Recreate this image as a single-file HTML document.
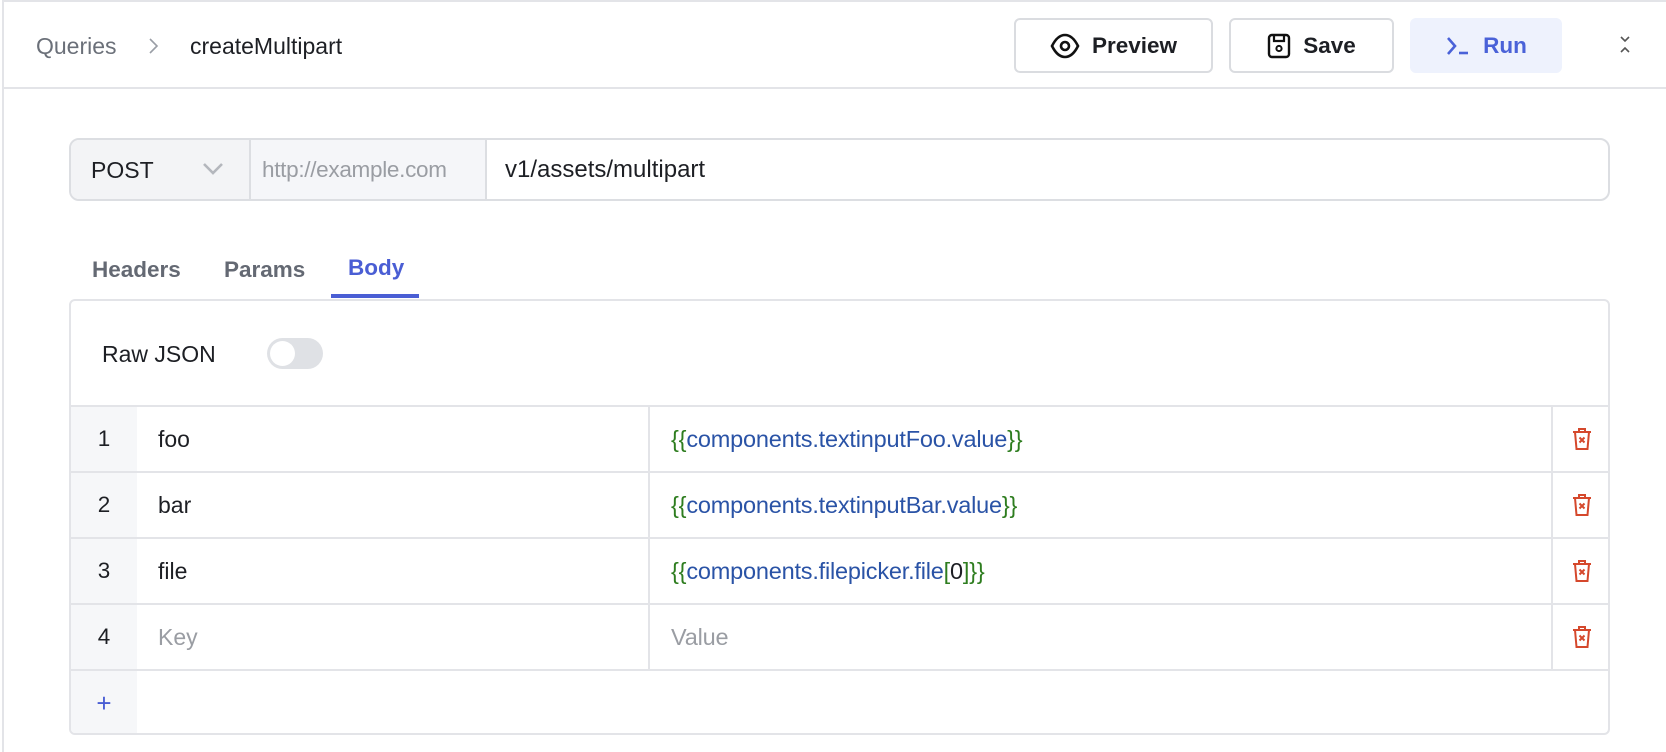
<!DOCTYPE html>
<html><head><meta charset="utf-8"><style>
*{box-sizing:border-box;margin:0;padding:0}
body{width:1666px;height:752px;background:#fff;font-family:"Liberation Sans",sans-serif;position:relative;overflow:hidden;color:#1d1f24}
.abs{position:absolute}
.hdr{left:2px;top:0;width:1664px;height:89px;border-top:2px solid #e3e4e8;border-left:2px solid #e3e4e8;border-bottom:2px solid #e3e4e8}
.vl{left:2px;top:89px;width:2px;height:663px;background:#e3e4e8}
.btn{border:2px solid #dadce0;border-radius:6px;top:18px;height:55px;display:flex;align-items:center;justify-content:center;gap:12px;font-size:22.5px;font-weight:bold}
.t{white-space:nowrap;line-height:1}
.url{left:69px;top:138px;width:1541px;height:63px;border:2px solid #dcdee2;border-radius:10px;overflow:hidden}
.panel{left:69px;top:299px;width:1541px;height:436px;border:2px solid #e3e4e8;border-radius:6px;overflow:hidden}
.row{position:absolute;left:0;width:100%;border-top:2px solid #e3e4e8;height:66px}
.num{position:absolute;left:0;top:0;width:66px;height:100%;background:#f6f7f9;font-size:22.5px;display:flex;align-items:center;justify-content:center}
.k{position:absolute;left:87px;top:0;height:100%;display:flex;align-items:center;font-size:23px}
.v{position:absolute;left:600px;top:0;height:100%;display:flex;align-items:center;font-size:23.5px;color:#2a53a6;letter-spacing:-0.2px}
.d1{position:absolute;left:577px;top:0;width:2px;height:100%;background:#e3e4e8}
.d2{position:absolute;left:1480px;top:0;width:2px;height:100%;background:#e3e4e8}
.tr{position:absolute;left:1500px;top:20px}
.g{color:#2e7d1f}
</style></head><body>
<div class="abs hdr"></div>
<div class="abs vl"></div>
<div class="abs t" style="left:36px;top:35px;font-size:23px;color:#6b7079">Queries</div>
<svg class="abs" style="left:146px;top:36px" width="14" height="20" viewBox="0 0 14 20"><path d="M4 3l7 7-7 7" fill="none" stroke="#9a9ea6" stroke-width="1.6"/></svg>
<div class="abs t" style="left:190px;top:35px;font-size:23px">createMultipart</div>

<div class="abs btn" style="left:1014px;width:199px"><svg width="30" height="26" viewBox="0 0 30 26"><path d="M2 13C6 5 10 2 15 2s9 3 13 11c-4 8-8 11-13 11S6 21 2 13z" fill="none" stroke="#111" stroke-width="2.6"/><circle cx="15" cy="13" r="4" fill="none" stroke="#111" stroke-width="2.6"/></svg><span>Preview</span></div>
<div class="abs btn" style="left:1229px;width:165px"><svg width="24" height="26" viewBox="0 0 24 26"><rect x="2" y="2" width="20" height="22" rx="3" fill="none" stroke="#111" stroke-width="2.4"/><path d="M7 2v6h10V2" fill="none" stroke="#111" stroke-width="2.2"/><circle cx="12" cy="15.5" r="2.6" fill="none" stroke="#111" stroke-width="2"/></svg><span>Save</span></div>
<div class="abs btn" style="left:1410px;width:152px;border-color:#eef2fd;background:#eef2fd;color:#4a62d8"><svg width="26" height="22" viewBox="0 0 26 22"><path d="M3 3l7 8-7 8" fill="none" stroke="#4a62d8" stroke-width="2.6"/><path d="M14 18h9" stroke="#4a62d8" stroke-width="2.6"/></svg><span>Run</span></div>
<svg class="abs" style="left:1618px;top:35px" width="14" height="20" viewBox="0 0 14 20"><path d="M3 2l4 4 4-4M3 17l4-4 4 4" fill="none" stroke="#555" stroke-width="1.6"/></svg>

<div class="abs url">
 <div class="abs" style="left:0;top:0;width:180px;height:100%;background:#f3f4f6;border-right:2px solid #dcdee2"></div>
 <div class="abs t" style="left:20px;top:19px;font-size:23px">POST</div>
 <svg class="abs" style="left:130px;top:21px" width="24" height="16" viewBox="0 0 24 16"><path d="M3 3l9 9 9-9" fill="none" stroke="#b4b7bd" stroke-width="2.6"/></svg>
 <div class="abs" style="left:180px;top:0;width:236px;height:100%;background:#f5f6f9;border-right:2px solid #dcdee2"></div>
 <div class="abs t" style="left:191px;top:19px;font-size:22.5px;color:#9a9da3;letter-spacing:-0.3px">http://example.com</div>
 <div class="abs t" style="left:434px;top:18px;font-size:24px">v1/assets/multipart</div>
</div>

<div class="abs t" style="left:92px;top:259px;font-size:22.5px;font-weight:bold;color:#646973">Headers</div>
<div class="abs t" style="left:224px;top:259px;font-size:22.5px;font-weight:bold;color:#646973">Params</div>
<div class="abs t" style="left:348px;top:257px;font-size:22.5px;font-weight:bold;color:#4a5ed4">Body</div>
<div class="abs" style="left:331px;top:294px;width:88px;height:4px;background:#4a5ed4"></div>

<div class="abs panel">
 <div class="abs t" style="left:31px;top:42px;font-size:23px">Raw JSON</div>
 <div class="abs" style="left:196px;top:37px;width:56px;height:31px;border-radius:16px;background:#dfe1e5"><div class="abs" style="left:3px;top:3px;width:25px;height:25px;border-radius:50%;background:#fff"></div></div>
 <div class="row" style="top:104px"><div class="num">1</div><div class="k">foo</div><div class="d1"></div><div class="v"><span class="g">{{</span>components.textinputFoo.value<span class="g">}}</span></div><div class="d2"></div><svg class="tr" width="22" height="24" viewBox="0 0 22 24"><path d="M2 5h18M8 5V2h6v3M4 5l1.5 17h11L18 5M8.5 10.5l5 5M13.5 10.5l-5 5" fill="none" stroke="#d5482c" stroke-width="2"/></svg></div>
 <div class="row" style="top:170px"><div class="num">2</div><div class="k">bar</div><div class="d1"></div><div class="v"><span class="g">{{</span>components.textinputBar.value<span class="g">}}</span></div><div class="d2"></div><svg class="tr" width="22" height="24" viewBox="0 0 22 24"><path d="M2 5h18M8 5V2h6v3M4 5l1.5 17h11L18 5M8.5 10.5l5 5M13.5 10.5l-5 5" fill="none" stroke="#d5482c" stroke-width="2"/></svg></div>
 <div class="row" style="top:236px"><div class="num">3</div><div class="k">file</div><div class="d1"></div><div class="v"><span class="g">{{</span>components.filepicker.file<span class="g">[</span><span style="color:#1d1f24">0</span><span class="g">]}}</span></div><div class="d2"></div><svg class="tr" width="22" height="24" viewBox="0 0 22 24"><path d="M2 5h18M8 5V2h6v3M4 5l1.5 17h11L18 5M8.5 10.5l5 5M13.5 10.5l-5 5" fill="none" stroke="#d5482c" stroke-width="2"/></svg></div>
 <div class="row" style="top:302px"><div class="num">4</div><div class="k" style="color:#9a9da3">Key</div><div class="d1"></div><div class="v" style="color:#9a9da3">Value</div><div class="d2"></div><svg class="tr" width="22" height="24" viewBox="0 0 22 24"><path d="M2 5h18M8 5V2h6v3M4 5l1.5 17h11L18 5M8.5 10.5l5 5M13.5 10.5l-5 5" fill="none" stroke="#d5482c" stroke-width="2"/></svg></div>
 <div class="row" style="top:368px"><div class="num" style="color:#4a5ed4;font-size:26px">+</div></div>
</div>
</body></html>
